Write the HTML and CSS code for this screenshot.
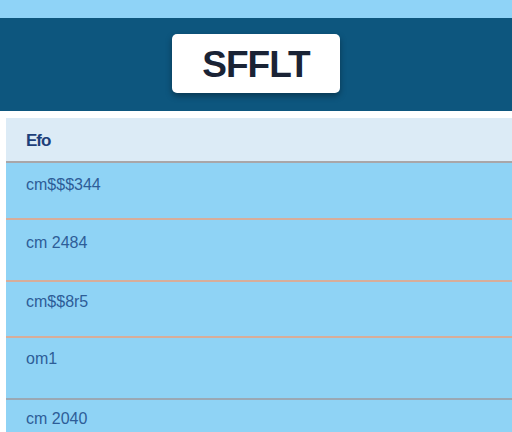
FILE: index.html
```html
<!DOCTYPE html>
<html lang="en">
<head>
    <meta charset="UTF-8">
    <title>SFFLT</title>
    <meta name="viewport" content="width=device-width, initial-scale=1.0">
    <link rel="stylesheet" href="styles.css">
</head>
<body>
    <div class="top-strip"></div>
    <header class="banner">
        <div class="logo-box">SFFLT</div>
    </header>

    <div class="table">
        <div class="table-head">Efo</div>
        <div class="row row-1">cm$$$344</div>
        <div class="row row-2">cm 2484</div>
        <div class="row row-3">cm$$8r5</div>
        <div class="row row-4">om1</div>
        <div class="row row-5">cm 2040</div>
    </div>
</body>
</html>
```

FILE: styles.css
```css
/* Global Reset */
* {
    margin: 0;
    padding: 0;
    box-sizing: border-box;
}
body {
    font-family: 'Liberation Sans', Arial, sans-serif;
    background: #ffffff;
    height: 432px;
    overflow: hidden;
}
.top-strip {
    height: 18px;
    background: #8fd3f7;
}
.banner {
    height: 93px;
    background: #0d567e;
    display: flex;
    justify-content: center;
    align-items: flex-start;
    padding-top: 16px;
}
.logo-box {
    width: 168px;
    height: 59px;
    background: #ffffff;
    border-radius: 5px;
    box-shadow: 0 3px 6px rgba(0, 0, 0, 0.35);
    display: flex;
    justify-content: center;
    align-items: center;
    font-size: 37px;
    font-weight: bold;
    letter-spacing: -1px;
    color: #1a2335;
    padding-top: 2px;
}
.table {
    margin: 7px 0 0 6px;
}
.table-head {
    height: 45px;
    background: #dcebf6;
    color: #1d3f7a;
    font-size: 17px;
    font-weight: bold;
    letter-spacing: -1px;
    padding: 13px 0 0 20px;
    border-bottom: 2px solid #a9a6a8;
}
.row {
    background: #8fd3f5;
    color: #2d5d98;
    font-size: 16px;
    padding-left: 20px;
    border-bottom: 2px solid #d7ad9a;
}
.row-1 {
    height: 57px;
    padding-top: 13px;
}
.row-2 {
    height: 62px;
    padding-top: 14px;
}
.row-3 {
    height: 56px;
    padding-top: 11px;
}
.row-4 {
    height: 62px;
    padding-top: 12px;
    border-bottom-color: #9aa8b4;
}
.row-5 {
    height: 40px;
    padding-top: 10px;
    border-bottom: none;
}
```
